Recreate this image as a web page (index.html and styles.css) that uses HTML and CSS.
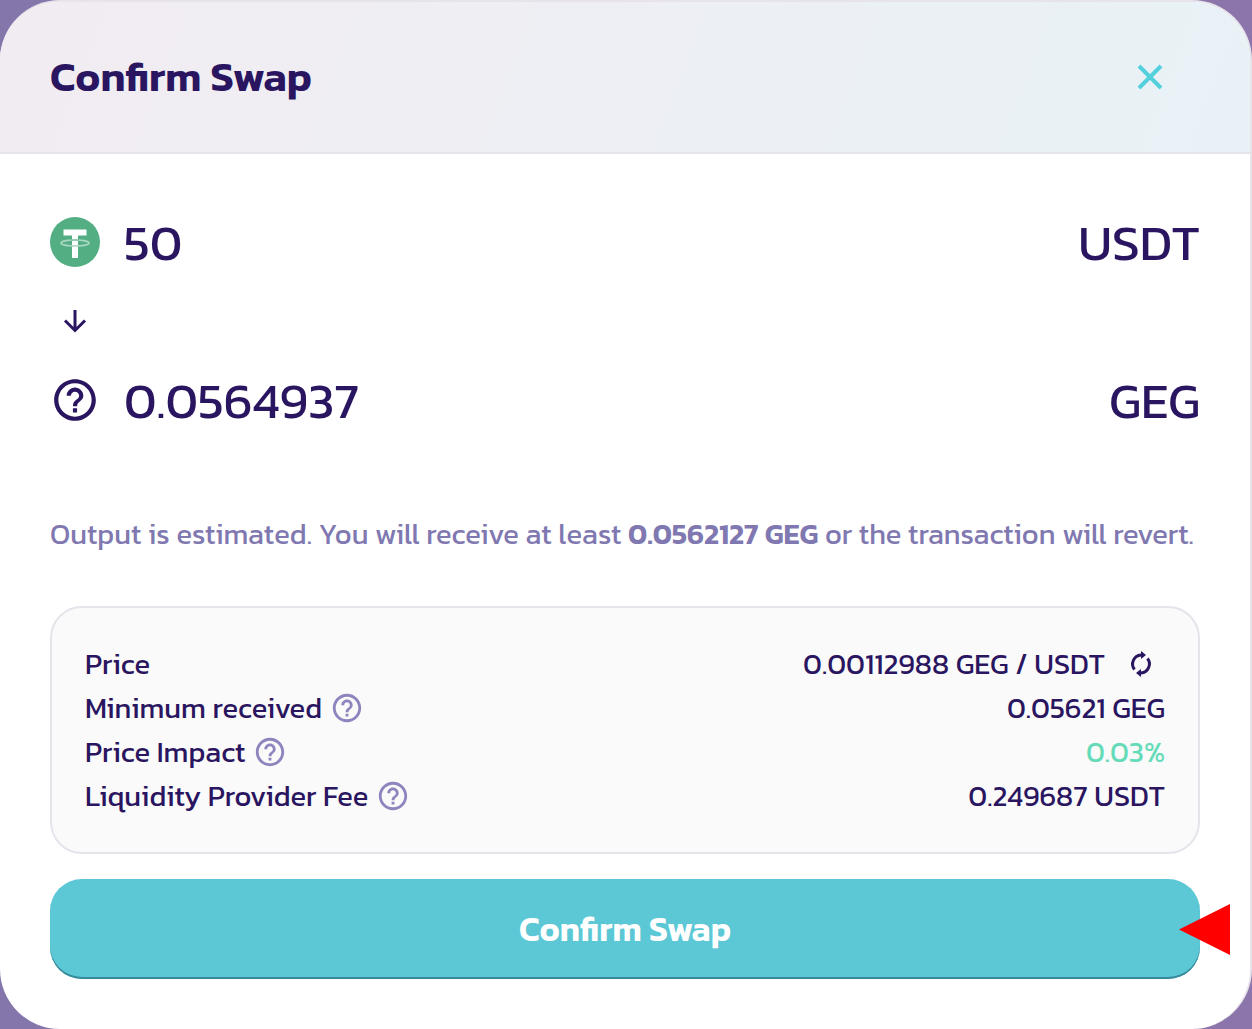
FILE: index.html
```html
<!DOCTYPE html>
<html lang="en">
<head>
  <meta charset="UTF-8" />
  <meta name="viewport" content="width=device-width, initial-scale=1" />
  <title>Confirm Swap</title>
  <link rel="stylesheet" href="styles.css">
</head>
<body>

  <!-- shared icons -->
  <svg class="sprite" aria-hidden="true">
    <symbol id="help" viewBox="0 0 24 24">
      <path d="M11 18h2v-2h-2v2zm1-16C6.48 2 2 6.48 2 12s4.480 10 10 10 10-4.480 10-10S17.520 2 12 2zm0 18c-4.410 0-8-3.590-8-8s3.590-8 8-8 8 3.590 8 8-3.590 8-8 8zm0-14c-2.210 0-4 1.790-4 4h2c0-1.100.9-2 2-2s2 .9 2 2c0 2-3 1.750-3 5h2c0-2.250 3-2.500 3-5 0-2.210-1.790-4-4-4z" />
    </symbol>
  </svg>

  <main class="modal" role="dialog" aria-labelledby="title">
    <header class="modal-header">
      <h1 id="title">Confirm Swap</h1>
      <button class="close" aria-label="Close">
        <svg viewBox="0 0 26 26"><path d="M2 2l22 22M24 2L2 24" /></svg>
      </button>
    </header>

    <div class="modal-body">
      <section class="tokens">
        <div class="token">
          <svg class="token-logo" viewBox="0 0 50 50" aria-hidden="true">
            <circle cx="25" cy="25" r="25" fill="#53ae83" />
            <path d="M13.500 12.500h23v6h-8.500V41h-6V18.500h-8.500z" fill="#fff" />
            <ellipse cx="25" cy="26" rx="14" ry="3" fill="none" stroke="#a9d7c1" stroke-width="1.600" />
            <path d="M21 22.300h8v1.500h-8z" fill="#53ae83" opacity=".5" />
          </svg>
          <span class="amount">50</span>
          <span class="symbol">USDT</span>
        </div>
        <svg class="arrow" viewBox="0 0 24 24" aria-hidden="true"><path d="M12 1v20M2 11.500l10 10 10-10" /></svg>
        <div class="token">
          <svg class="token-logo" viewBox="0 0 24 24" aria-hidden="true"><use href="#help" /></svg>
          <span class="amount">0.0564937</span>
          <span class="symbol">GEG</span>
        </div>
      </section>

      <p class="note">Output is estimated. You will receive at least <b>0.0562127 GEG</b> or the transaction will revert.</p>

      <dl class="details">
        <div class="row">
          <dt>Price</dt>
          <dd>
            0.00112988 GEG / USDT
            <button class="refresh" aria-label="Invert price">
              <svg viewBox="0 0 24 28">
                <path class="arc" d="M5.500 19.500A9 9 0 0 1 12 5M18.500 8.500A9 9 0 0 1 12 23" />
                <path d="M12 1l5 4-5 4zM12 19l-5 4 5 4z" />
              </svg>
            </button>
          </dd>
        </div>
        <div class="row">
          <dt>Minimum received <svg class="help" aria-hidden="true"><use href="#help" /></svg></dt>
          <dd>0.05621 GEG</dd>
        </div>
        <div class="row">
          <dt>Price Impact <svg class="help" aria-hidden="true"><use href="#help" /></svg></dt>
          <dd class="good">0.03%</dd>
        </div>
        <div class="row">
          <dt>Liquidity Provider Fee <svg class="help" aria-hidden="true"><use href="#help" /></svg></dt>
          <dd>0.249687 USDT</dd>
        </div>
      </dl>

      <div class="action">
        <button class="confirm">Confirm Swap</button>
        <span class="pointer"></span>
      </div>
    </div>
  </main>

</body>
</html>
```

FILE: styles.css
```css
:root {
  --color-text: #2a1560;
  --color-subtle: #8078b0;
  --color-primary: #5cc8d6;
  --color-border: #e7e3eb;
  --color-backdrop: #8476ab;
}

* {
  box-sizing: border-box;
}

body {
  margin: 0;
  font-family: Kanit, "Noto Sans", sans-serif;
  background: linear-gradient(90deg, var(--color-backdrop), #8b75aa);
  color: var(--color-text);
}

button {
  font: inherit;
  border: 0;
  padding: 0;
  background: none;
  cursor: pointer;
}

svg {
  display: block;
  fill: currentColor;
}

.sprite {
  display: none;
}

.modal {
  min-height: 100vh;
  background: #fff;
  border: 2px solid var(--color-border);
  border-left: 0;
  border-bottom: 0;
  border-radius: 60px;
  overflow: hidden;
}

.modal-header {
  display: flex;
  align-items: center;
  justify-content: space-between;
  height: 152px;
  padding: 0 87px 0 50px;
  border-bottom: 2px solid var(--color-border);
  background: linear-gradient(111deg, #f2ecf2 0%, #e8f2f6 100%);
}

h1 {
  margin: 0;
  font-size: 42px;
  line-height: 44px;
  font-weight: 600;
}

.close {
  color: #53d0dc;
}

.close svg {
  width: 26px;
  height: 26px;
  stroke: currentColor;
  stroke-width: 4;
}

.modal-body {
  padding: 48px 50px 50px;
}

.token {
  display: flex;
  align-items: center;
  gap: 24px;
  height: 80px;
  font-size: 50px;
}

.token-logo {
  width: 50px;
  height: 50px;
}

.symbol {
  margin-left: auto;
}

.arrow {
  width: 24px;
  height: 24px;
  margin: 27px 13px;
  fill: none;
  stroke: currentColor;
  stroke-width: 3;
}

.note {
  margin: 74px 0 52px;
  font-size: 29px;
  line-height: 40px;
  color: var(--color-subtle);
}

.note b {
  font-weight: 600;
}

.details {
  margin: 0 0 25px;
  padding: 34px 33px;
  border: 2px solid var(--color-border);
  border-radius: 32px;
  background: #fafafa;
  font-size: 29px;
  line-height: 44px;
}

.row,
.row dt,
.row dd {
  display: flex;
  align-items: center;
}

.row {
  justify-content: space-between;
}

.row dd {
  margin: 0;
}

.row .good {
  color: #65dbb8;
}

.help {
  width: 34px;
  height: 34px;
  margin-left: 8px;
  color: #8f84bd;
}

.refresh {
  margin: 0 12px 0 24px;
  color: var(--color-text);
}

.refresh svg {
  width: 24px;
  height: 28px;
}

.refresh .arc {
  fill: none;
  stroke: currentColor;
  stroke-width: 3;
}

.action {
  position: relative;
}

.confirm {
  width: 100%;
  height: 100px;
  border-radius: 32px;
  background: var(--color-primary);
  box-shadow: inset 0 -2px 0 #38899a;
  color: #fff;
  font-size: 34px;
  font-weight: 600;
}

/* red marker over the end of the button */
.pointer {
  position: absolute;
  top: 25px;
  right: -30px;
  width: 51px;
  height: 51px;
  background: #f00;
  clip-path: polygon(0 50%, 100% 0, 100% 100%);
}
```
